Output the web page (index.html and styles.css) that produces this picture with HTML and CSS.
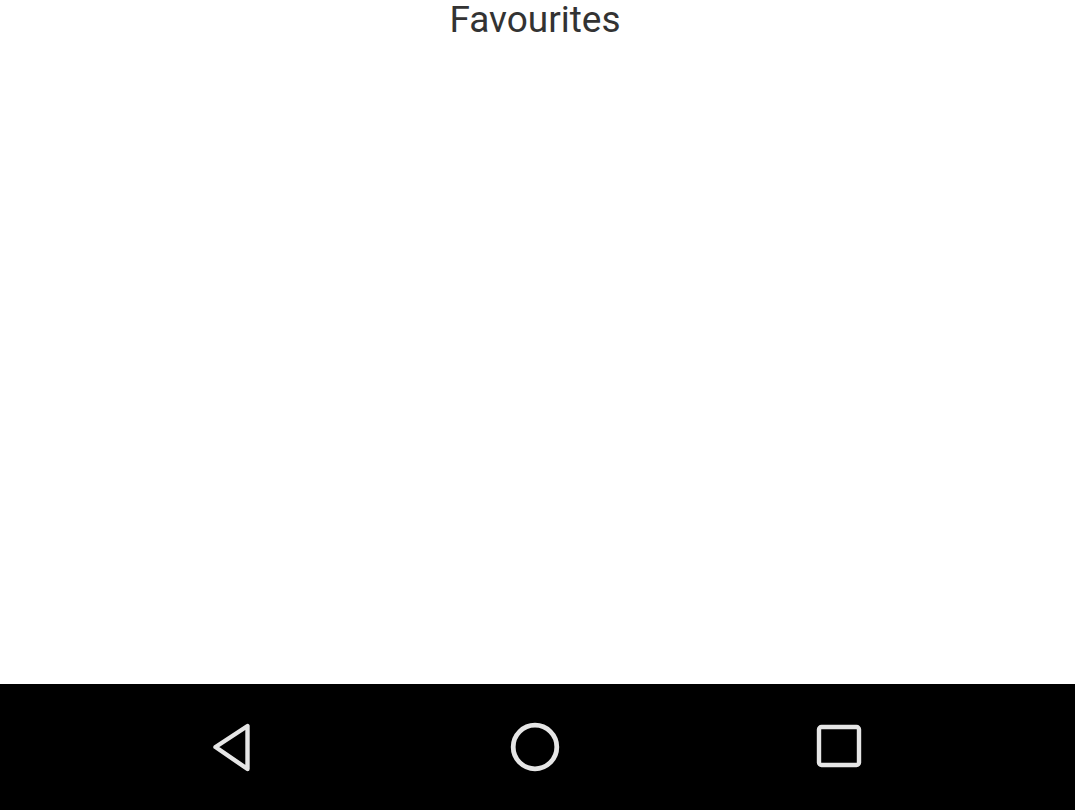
FILE: index.html
```html
<!DOCTYPE html>
<html>
<head>
<meta charset="utf-8">
<link rel="stylesheet" href="styles.css">
</head>
<body>
<div class="screen">
  <main class="content">
    <h1 class="title">Favourites</h1>
  </main>
  <nav class="navbar">
    <button class="nav-btn" aria-label="Back">
      <svg width="60" height="60" viewBox="0 0 60 60"><path d="M14.5 30 L46.5 9 L46.5 52 Z" fill="none" stroke="#e6e6e6" stroke-width="4.4" stroke-linejoin="round"/></svg>
    </button>
    <button class="nav-btn" aria-label="Home">
      <svg width="60" height="60" viewBox="0 0 60 60"><circle cx="30" cy="30" r="21.8" fill="none" stroke="#e6e6e6" stroke-width="4.8"/></svg>
    </button>
    <button class="nav-btn" aria-label="Recents">
      <svg width="60" height="60" viewBox="0 0 60 60"><rect x="10" y="10" width="40" height="38" rx="2.5" fill="none" stroke="#e6e6e6" stroke-width="4.4"/></svg>
    </button>
  </nav>
</div>
</body>
</html>
```
FILE: styles.css
```css
html, body {
  margin: 0;
  padding: 0;
  background: #ffffff;
}
.screen {
  width: 1075px;
  height: 810px;
  display: flex;
  flex-direction: column;
  overflow: hidden;
}
.content {
  flex: 1;
  background: #ffffff;
}
.title {
  margin: 0;
  padding-right: 5px;
  font-family: Roboto, "Liberation Sans", sans-serif;
  font-weight: 400;
  font-size: 37px;
  line-height: 40px;
  color: #333333;
  text-align: center;
}
.navbar {
  height: 126px;
  background: #000000;
  display: flex;
  justify-content: center;
  align-items: center;
  gap: 244px;
  padding-right: 5px;
}
.nav-btn {
  background: none;
  border: 0;
  padding: 0;
  width: 60px;
  height: 60px;
  display: flex;
  align-items: center;
  justify-content: center;
}
.nav-btn svg {
  display: block;
}
```
